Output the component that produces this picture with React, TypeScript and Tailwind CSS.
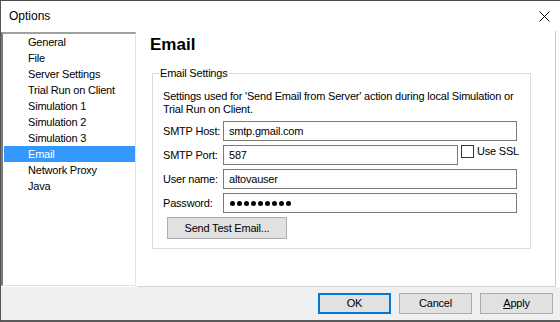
import React from "react";

const treeItems = [
  "General",
  "File",
  "Server Settings",
  "Trial Run on Client",
  "Simulation 1",
  "Simulation 2",
  "Simulation 3",
  "Email",
  "Network Proxy",
  "Java",
];

function Field({ label, value, width, children }: { label: string; value?: React.ReactNode; width: string; children?: React.ReactNode }) {
  return (
    <div className="flex items-center h-[20px]">
      <div className="w-[60px] shrink-0">{label}</div>
      <div className={`${width} shrink-0 h-[20px] border border-[#7a7a7a] bg-white flex items-center pl-[5px]`}>{value}</div>
      {children}
    </div>
  );
}

export default function App() {
  return (
    <div
      className="w-[560px] h-[322px] bg-white border-l border-t border-l-[#555555] border-t-[#4a4a4a] flex flex-col overflow-hidden text-black text-[11px] tracking-[-0.2px]"
      style={{ fontFamily: '"Liberation Sans", Arial, sans-serif' }}
    >
      {/* Title bar */}
      <div className="h-[30px] shrink-0 flex items-center justify-between pl-[8px] pr-[10px]">
        <span className="text-[12px] tracking-normal">Options</span>
        <svg width="11" height="11" viewBox="0 0 11 11">
          <path d="M0.5 0.5 L10.5 10.5 M10.5 0.5 L0.5 10.5" stroke="#000" strokeWidth="1" />
        </svg>
      </div>

      {/* Body */}
      <div className="h-[256px] shrink-0 flex">
        {/* Tree */}
        <div className="w-[135px] h-[254px] mt-[1px] border-l-2 border-t-2 border-r border-b border-l-[#7a7a7a] border-t-[#a0a0a0] border-r-[#e3e3e3] border-b-[#e3e3e3] bg-white">
          {treeItems.map((it) => (
            <div
              key={it}
              className={`h-[16px] ml-[1px] pl-[24px] flex items-center leading-none ${it === "Email" ? "bg-[#3399ff] text-white" : ""}`}
            >
              {it}
            </div>
          ))}
        </div>

        {/* Right panel */}
        <div className="w-[419px] ml-[1px] border-r border-b border-r-[#c8c8c8] border-b-[#d4d4d4] bg-white pl-[13px] pt-[4px]">
          <div className="text-[17px] font-bold leading-[20px] tracking-normal">Email</div>
          <fieldset className="ml-[2px] mt-[11px] w-[378px] border border-[#dcdcdc] pl-[10px] pr-[11px] pb-[9px] pt-[10px]">
            <legend className="-ml-[4px] px-[1px] leading-[14px]">Email Settings</legend>
            <div className="leading-[13px] whitespace-nowrap">
              Settings used for 'Send Email from Server' action during local Simulation or
              <br />
              Trial Run on Client.
            </div>
            <div className="mt-[5px] flex flex-col gap-[4px]">
              <Field label="SMTP Host:" value="smtp.gmail.com" width="w-[294px]" />
              <Field label="SMTP Port:" value="587" width="w-[235px]">
                <div className="flex items-center self-start ml-[3px] whitespace-nowrap shrink-0">
                  <div className="w-[13px] h-[13px] border border-[#333333] bg-white shrink-0" />
                  <span className="ml-[3px] leading-[13px]">Use SSL</span>
                </div>
              </Field>
              <Field label="User name:" value="altovauser" width="w-[294px]" />
              <Field
                label="Password:"
                width="w-[294px]"
                value={
                  <div className="flex gap-[2px] pl-[1px]">
                    {Array.from({ length: 9 }).map((_, i) => (
                      <span key={i} className="w-[5px] h-[5px] rounded-full bg-black" />
                    ))}
                  </div>
                }
              />
              <button className="ml-[4px] w-[120px] h-[22px] bg-[#e1e1e1] border border-[#adadad] flex items-center justify-center">
                Send Test Email...
              </button>
            </div>
          </fieldset>
        </div>
      </div>

      {/* Footer */}
      <div className="flex-1 bg-[#f0f0f0] border-b-2 border-b-[#5a5a5a] flex justify-end items-start pt-[6px] pr-[7px] gap-[8px]">
        <button className="w-[73px] h-[21px] bg-[#e1e1e1] border-2 border-[#0078d7] flex items-center justify-center">OK</button>
        <button className="w-[73px] h-[21px] bg-[#e1e1e1] border border-[#adadad] flex items-center justify-center">Cancel</button>
        <button className="w-[73px] h-[21px] bg-[#e1e1e1] border border-[#adadad] flex items-center justify-center">
          <span><span className="underline">A</span>pply</span>
        </button>
      </div>
    </div>
  );
}
